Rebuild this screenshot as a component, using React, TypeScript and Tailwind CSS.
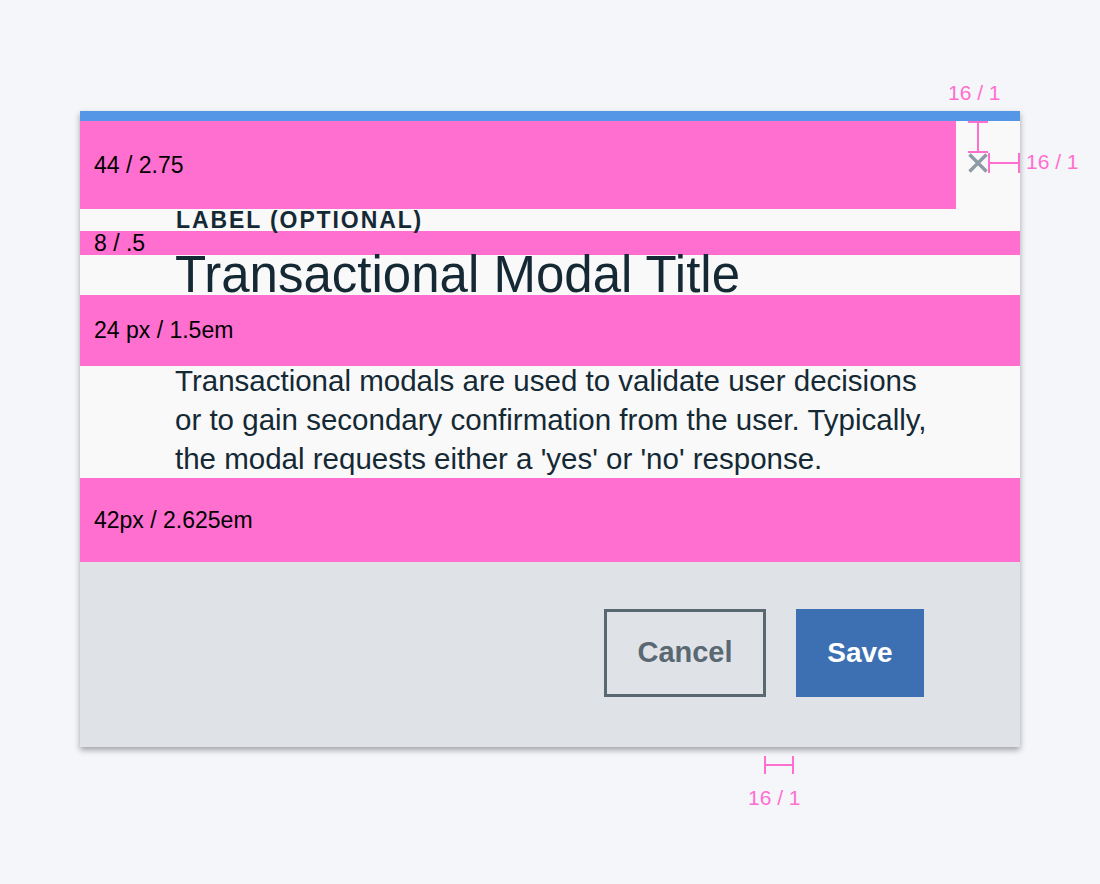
export default function App() {
  return (
    <div className="min-h-screen bg-[#f5f6fa] font-['Liberation_Sans',Arial,sans-serif]">
      <div className="pt-[111px] pl-[80px]">
        {/* Modal */}
        <div className="relative w-[940px] bg-[#f9f9f9] border-t-[10px] border-[#5596e6] shadow-[0_3px_6px_rgba(0,0,0,0.35)]">
          {/* Top spacing + close */}
          <div className="flex">
            <div className="w-[876px] h-[88px] bg-[#ff6fd0] flex items-center pl-[14px] text-[23px] text-black">
              44 / 2.75
            </div>
            <div className="flex flex-col pl-[12px]">
              {/* vertical measure */}
              <div className="relative w-[20px] h-[32px] flex justify-center">
                <div className="absolute top-0 left-0 w-[20px] h-[2px] bg-[#ff6fd0]" />
                <div className="w-[2px] h-full bg-[#ff6fd0]" />
                <div className="absolute bottom-0 left-0 w-[20px] h-[2px] bg-[#ff6fd0]" />
              </div>
              <div className="flex items-center">
                <svg width="20" height="20" viewBox="0 0 20 20" className="text-[#8c9ba5]">
                  <path d="M1.5 1.5L18.5 18.5M18.5 1.5L1.5 18.5" stroke="currentColor" strokeWidth="3.4" fill="none" />
                </svg>
                {/* horizontal measure */}
                <div className="relative w-[32px] h-[20px] flex items-center">
                  <div className="absolute left-0 top-0 w-[2px] h-[20px] bg-[#ff6fd0]" />
                  <div className="w-full h-[2px] bg-[#ff6fd0]" />
                  <div className="absolute right-0 top-0 w-[2px] h-[20px] bg-[#ff6fd0]" />
                </div>
              </div>
            </div>
          </div>

          {/* Label */}
          <div className="h-[22px] pl-[96px] text-[23px] leading-[23px] font-bold tracking-[1.9px] text-[#152935]">
            LABEL (OPTIONAL)
          </div>

          <div className="h-[24px] bg-[#ff6fd0] flex items-center pl-[14px] text-[23px] text-black">
            8 / .5
          </div>

          {/* Title */}
          <div className="h-[40px] pl-[95px] text-[51px] leading-[40px] font-light text-[#152935] whitespace-nowrap">
            Transactional Modal Title
          </div>

          <div className="h-[71px] bg-[#ff6fd0] flex items-center pl-[14px] text-[23px] text-black">
            24 px / 1.5em
          </div>

          {/* Body */}
          <div className="h-[112px] pl-[95px] flex flex-col">
            <p className="-mt-[5px] text-[29.5px] leading-[39px] text-[#152935] whitespace-nowrap">
              Transactional modals are used to validate user decisions
              <br />
              or to gain secondary confirmation from the user. Typically,
              <br />
              the modal requests either a 'yes' or 'no' response.
            </p>
          </div>

          <div className="h-[84px] bg-[#ff6fd0] flex items-center pl-[14px] text-[23px] text-black">
            42px / 2.625em
          </div>

          {/* Footer */}
          <div className="h-[185px] bg-[#dfe3e8] flex justify-end items-start pt-[47px] pr-[96px] gap-[30px]">
            <button className="w-[162px] h-[88px] border-[3px] border-[#5a6872] text-[#5a6872] text-[29px] font-bold">
              Cancel
            </button>
            <button className="w-[128px] h-[88px] bg-[#3d70b2] text-white text-[28px] font-bold">
              Save
            </button>
          </div>

          {/* Outer annotations */}
          <div className="absolute -top-[39px] left-[868px] text-[21px] leading-[21px] text-[#ff6fd0] whitespace-nowrap">
            16 / 1
          </div>
          <div className="absolute top-[30px] left-[946px] text-[21px] leading-[21px] text-[#ff6fd0] whitespace-nowrap">
            16 / 1
          </div>
          <div className="absolute top-[635px] left-[684px] w-[30px] h-[18px] flex items-center">
            <div className="absolute left-0 top-0 w-[2px] h-[18px] bg-[#ff6fd0]" />
            <div className="w-full h-[2px] bg-[#ff6fd0]" />
            <div className="absolute right-0 top-0 w-[2px] h-[18px] bg-[#ff6fd0]" />
          </div>
          <div className="absolute top-[666px] left-[668px] text-[21px] leading-[21px] text-[#ff6fd0] whitespace-nowrap">
            16 / 1
          </div>
        </div>
      </div>
    </div>
  );
}
